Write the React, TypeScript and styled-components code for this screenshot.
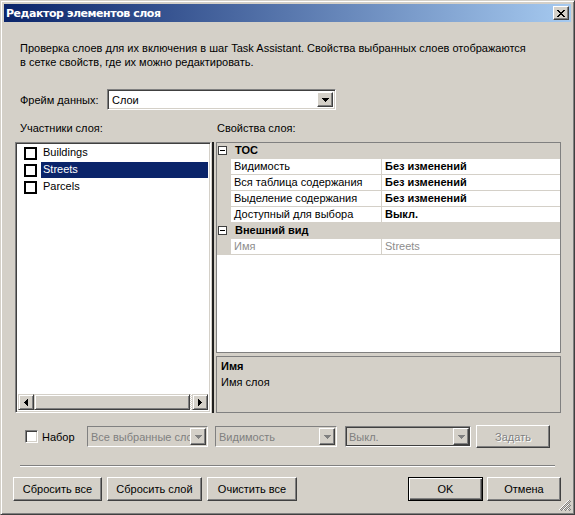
import styled, { createGlobalStyle, css } from "styled-components";

const GlobalStyle = createGlobalStyle`
  html, body {
    margin: 0;
    padding: 0;
    background: #D4D0C8;
  }
  body {
    font-family: "Liberation Sans", Arial, sans-serif;
    font-size: 11px;
    color: #000;
  }
  * { box-sizing: border-box; }
`;

const raised = css`
  border: 1px solid;
  border-color: #fff #404040 #404040 #fff;
  box-shadow: inset -1px -1px 0 #808080;
  background: #D4D0C8;
`;

const sunken = css`
  border: 1px solid;
  border-color: #808080 #fff #fff #808080;
  box-shadow: inset 1px 1px 0 #404040, inset -1px -1px 0 #D4D0C8;
`;

const Window = styled.div`
  position: relative;
  width: 575px;
  height: 515px;
  background: #D4D0C8;
  border: 1px solid;
  border-color: #D4D0C8 #404040 #404040 #D4D0C8;
  box-shadow: inset 1px 1px 0 #fff, inset -1px -1px 0 #808080;
  padding: 3px;
  display: flex;
  flex-direction: column;
`;

const TitleBar = styled.div`
  height: 18px;
  display: flex;
  align-items: center;
  justify-content: space-between;
  padding: 0 2px;
  background: linear-gradient(to right, #0A246A, #A6CAF0);
`;

const TitleText = styled.span`
  font-family: "DejaVu Sans", Verdana, sans-serif;
  font-weight: bold;
  font-size: 11px;
  color: #fff;
  letter-spacing: -0.45px;
`;

const CloseButton = styled.div`
  ${raised};
  width: 16px;
  height: 14px;
  display: flex;
  align-items: center;
  justify-content: center;
`;

const Body = styled.div`
  flex: 1;
  display: flex;
  flex-direction: column;
  padding: 0 10px 0 9px;
`;

const Description = styled.p`
  margin: 19px 0 0 7px;
  line-height: 14px;
`;

const FrameRow = styled.div`
  margin-top: 20px;
  padding-left: 7px;
  height: 21px;
  display: flex;
  align-items: center;
`;

const FieldLabel = styled.span<{ $width: number }>`
  width: ${(p) => p.$width}px;
  flex-shrink: 0;
`;

const ComboBox = styled.div<{ $width: number; $disabled?: boolean; $focus?: boolean; $ml?: number }>`
  width: ${(p) => p.$width}px;
  height: 21px;
  margin-left: ${(p) => p.$ml ?? 0}px;
  flex-shrink: 0;
  display: flex;
  align-items: center;
  ${(p) =>
    p.$disabled
      ? css`
          border: 1px solid;
          border-color: #808080 #fff #fff #808080;
          background: #D4D0C8;
          color: #808080;
          padding: 1px;
          ${p.$focus ? "box-shadow: inset 0 0 0 1px #404040;" : ""}
        `
      : css`
          ${sunken};
          background: #fff;
          padding: 2px;
        `}
`;

const ComboText = styled.span`
  flex: 1;
  padding-left: 2px;
  overflow: hidden;
  white-space: nowrap;
`;

const DropButton = styled.div`
  ${raised};
  width: 16px;
  height: 100%;
  flex-shrink: 0;
  display: flex;
  align-items: center;
  justify-content: center;
`;

const PanelLabels = styled.div`
  margin-top: 11px;
  display: flex;
  line-height: 14px;
`;

const PanelLabel = styled.span<{ $width?: number }>`
  ${(p) => (p.$width ? `width: ${p.$width}px;` : "")}
  padding-left: ${(p) => (p.$width ? 7 : 0)}px;
`;

const Panels = styled.div`
  margin-top: 7px;
  height: 271px;
  display: flex;
`;

const LayerList = styled.div`
  ${sunken};
  margin-left: 2px;
  width: 196px;
  background: #fff;
  display: flex;
  flex-direction: column;
  padding: 2px;
`;

const ListItems = styled.div`
  flex: 1;
`;

const ListItem = styled.div`
  height: 17px;
  display: flex;
  align-items: flex-start;
`;

const ItemCheck = styled.span`
  width: 13px;
  height: 13px;
  margin: 2px 0 0 6px;
  border: 2px solid #000;
  background: #fff;
  flex-shrink: 0;
`;

const ItemText = styled.span<{ $selected?: boolean }>`
  flex: 1;
  margin-left: 4px;
  padding-left: 2px;
  height: 16px;
  line-height: 15px;
  background: ${(p) => (p.$selected ? "#0A246A" : "transparent")};
  color: ${(p) => (p.$selected ? "#fff" : "#000")};
`;

const HScroll = styled.div`
  height: 16px;
  display: flex;
`;

const ScrollButton = styled.div`
  border: 1px solid;
  border-color: #D4D0C8 #404040 #404040 #D4D0C8;
  box-shadow: inset 1px 1px 0 #fff, inset -1px -1px 0 #808080;
  background: #D4D0C8;
  width: 16px;
  height: 16px;
  display: flex;
  align-items: center;
  justify-content: center;
`;

const ScrollThumb = styled(ScrollButton)`
  width: 156px;
`;

const ScrollTrack = styled.div`
  flex: 1;
  background-image: conic-gradient(#fff 25%, #D4D0C8 0 50%, #fff 0 75%, #D4D0C8 0);
  background-size: 2px 2px;
`;

const Splitter = styled.div`
  width: 5px;
  flex-shrink: 0;
  padding-left: 1px;
  &::before {
    content: "";
    display: block;
    width: 2px;
    height: 100%;
    background: #202020;
  }
`;

const GridColumn = styled.div`
  flex: 1;
  display: flex;
  flex-direction: column;
  gap: 3px;
`;

const PropArea = styled.div`
  height: 211px;
  border: 1px solid #808080;
  background: #fff;
`;

const PropRow = styled.div`
  height: 16px;
  display: flex;
  border-bottom: 1px solid #D4D0C8;
`;

const MarginCell = styled.div`
  width: 14px;
  flex-shrink: 0;
  background: #D4D0C8;
  display: flex;
  align-items: center;
`;

const NameCell = styled.div<{ $muted?: boolean }>`
  width: 151px;
  flex-shrink: 0;
  border-right: 1px solid #D4D0C8;
  padding-left: 3px;
  line-height: 15px;
  white-space: nowrap;
  overflow: hidden;
  color: ${(p) => (p.$muted ? "#8D8D8D" : "#000")};
`;

const ValueCell = styled.div<{ $muted?: boolean }>`
  flex: 1;
  padding-left: 3px;
  line-height: 15px;
  font-weight: ${(p) => (p.$muted ? "normal" : "bold")};
  color: ${(p) => (p.$muted ? "#8D8D8D" : "#000")};
`;

const CategoryRow = styled.div`
  height: 16px;
  display: flex;
  align-items: center;
  background: #D4D0C8;
  border-bottom: 1px solid #D4D0C8;
`;

const Expander = styled.span`
  width: 9px;
  height: 9px;
  margin-left: 1px;
  border: 1px solid #404040;
  background: #fff;
  position: relative;
  flex-shrink: 0;
  &::after {
    content: "";
    position: absolute;
    left: 1px;
    top: 3px;
    width: 5px;
    height: 1px;
    background: #000;
  }
`;

const CategoryText = styled.span`
  margin-left: 8px;
  font-weight: bold;
  line-height: 15px;
`;

const HelpPane = styled.div`
  flex: 1;
  border: 1px solid #808080;
  background: #D4D0C8;
  padding: 2px 0 0 4px;
  line-height: 14px;
`;

const HelpTitle = styled.div`
  font-weight: bold;
  margin-bottom: 2px;
`;

const ControlRow = styled.div`
  margin-top: 12px;
  height: 23px;
  display: flex;
  align-items: center;
`;

const CheckBox = styled.span`
  ${sunken};
  width: 13px;
  height: 13px;
  margin-left: 12px;
  background: #fff;
  flex-shrink: 0;
`;

const CheckLabel = styled.span`
  width: 45px;
  margin-left: 4px;
  flex-shrink: 0;
`;

const ActionButton = styled.div<{ $width: number; $height?: number; $default?: boolean; $disabled?: boolean; $ml?: number }>`
  width: ${(p) => p.$width}px;
  height: ${(p) => p.$height ?? 24}px;
  margin-left: ${(p) => p.$ml ?? 0}px;
  flex-shrink: 0;
  display: flex;
  align-items: center;
  justify-content: center;
  background: #D4D0C8;
  ${(p) =>
    p.$default
      ? css`
          border: 1px solid #000;
          box-shadow: inset 1px 1px 0 #fff, inset -1px -1px 0 #404040, inset -2px -2px 0 #808080;
        `
      : css`
          border: 1px solid;
          border-color: #fff #404040 #404040 #fff;
          box-shadow: inset -1px -1px 0 #808080;
        `}
  ${(p) =>
    p.$disabled &&
    css`
      color: #808080;
      text-shadow: 1px 1px 0 #fff;
    `}
`;

const Separator = styled.div`
  margin: 17px 6px 0 7px;
  height: 2px;
  border-top: 1px solid #808080;
  border-bottom: 1px solid #fff;
`;

const ButtonRow = styled.div`
  margin-top: 10px;
  display: flex;
  gap: 5px;
`;

const Spacer = styled.div`
  flex: 1;
`;

const SizeGrip = styled.svg`
  position: absolute;
  right: 3px;
  bottom: 3px;
`;

function DownArrow({ color = "#000" }: { color?: string }) {
  return (
    <svg width="7" height="4" viewBox="0 0 7 4" shapeRendering="crispEdges">
      <path d="M0 0h7v1H0zM1 1h5v1H1zM2 2h3v1H2zM3 3h1v1H3z" fill={color} />
    </svg>
  );
}

function SideArrow({ dir }: { dir: "left" | "right" }) {
  const d =
    dir === "left"
      ? "M3 0h1v7H3zM2 1h1v5H2zM1 2h1v3H1zM0 3h1v1H0z"
      : "M0 0h1v7H0zM1 1h1v5H1zM2 2h1v3H2zM3 3h1v1H3z";
  return (
    <svg width="4" height="7" viewBox="0 0 4 7" shapeRendering="crispEdges">
      <path d={d} fill="#000" />
    </svg>
  );
}

const layers = [
  { name: "Buildings", selected: false },
  { name: "Streets", selected: true },
  { name: "Parcels", selected: false },
];

const tocProps = [
  ["Видимость", "Без изменений"],
  ["Вся таблица содержания", "Без изменений"],
  ["Выделение содержания", "Без изменений"],
  ["Доступный для выбора", "Выкл."],
];

function App() {
  return (
    <>
      <GlobalStyle />
      <Window>
        <TitleBar>
          <TitleText>Редактор элементов слоя</TitleText>
          <CloseButton>
            <svg width="8" height="7" viewBox="0 0 8 7" shapeRendering="crispEdges">
              <path
                d="M0 0h2v1H0zM6 0h2v1H6zM1 1h2v1H1zM5 1h2v1H5zM2 2h4v1H2zM3 3h2v1H3zM2 4h4v1H2zM1 5h2v1H1zM5 5h2v1H5zM0 6h2v1H0zM6 6h2v1H6z"
                fill="#000"
              />
            </svg>
          </CloseButton>
        </TitleBar>
        <Body>
          <Description>
            Проверка слоев для их включения в шаг Task Assistant. Свойства выбранных слоев отображаются
            <br />
            в сетке свойств, где их можно редактировать.
          </Description>

          <FrameRow>
            <FieldLabel $width={87}>Фрейм данных:</FieldLabel>
            <ComboBox $width={229}>
              <ComboText>Слои</ComboText>
              <DropButton>
                <DownArrow />
              </DropButton>
            </ComboBox>
          </FrameRow>

          <PanelLabels>
            <PanelLabel $width={204}>Участники слоя:</PanelLabel>
            <PanelLabel>Свойства слоя:</PanelLabel>
          </PanelLabels>

          <Panels>
            <LayerList>
              <ListItems>
                {layers.map((l) => (
                  <ListItem key={l.name}>
                    <ItemCheck />
                    <ItemText $selected={l.selected}>{l.name}</ItemText>
                  </ListItem>
                ))}
              </ListItems>
              <HScroll>
                <ScrollButton>
                  <SideArrow dir="left" />
                </ScrollButton>
                <ScrollThumb />
                <ScrollTrack />
                <ScrollButton>
                  <SideArrow dir="right" />
                </ScrollButton>
              </HScroll>
            </LayerList>

            <Splitter />

            <GridColumn>
              <PropArea>
                <CategoryRow>
                  <Expander />
                  <CategoryText>TOC</CategoryText>
                </CategoryRow>
                {tocProps.map(([name, value]) => (
                  <PropRow key={name}>
                    <MarginCell />
                    <NameCell>{name}</NameCell>
                    <ValueCell>{value}</ValueCell>
                  </PropRow>
                ))}
                <CategoryRow>
                  <Expander />
                  <CategoryText>Внешний вид</CategoryText>
                </CategoryRow>
                <PropRow>
                  <MarginCell />
                  <NameCell $muted>Имя</NameCell>
                  <ValueCell $muted>Streets</ValueCell>
                </PropRow>
              </PropArea>
              <HelpPane>
                <HelpTitle>Имя</HelpTitle>
                <div>Имя слоя</div>
              </HelpPane>
            </GridColumn>
          </Panels>

          <ControlRow>
            <CheckBox />
            <CheckLabel>Набор</CheckLabel>
            <ComboBox $width={121} $disabled>
              <ComboText>Все выбранные слои</ComboText>
              <DropButton>
                <DownArrow color="#808080" />
              </DropButton>
            </ComboBox>
            <ComboBox $width={122} $disabled $ml={7}>
              <ComboText>Видимость</ComboText>
              <DropButton>
                <DownArrow color="#808080" />
              </DropButton>
            </ComboBox>
            <ComboBox $width={126} $disabled $focus $ml={8}>
              <ComboText>Выкл.</ComboText>
              <DropButton>
                <DownArrow color="#808080" />
              </DropButton>
            </ComboBox>
            <ActionButton $width={74} $height={23} $disabled $ml={5}>
              Задать
            </ActionButton>
          </ControlRow>

          <Separator />

          <ButtonRow>
            <ActionButton $width={89}>Сбросить все</ActionButton>
            <ActionButton $width={95}>Сбросить слой</ActionButton>
            <ActionButton $width={90}>Очистить все</ActionButton>
            <Spacer />
            <ActionButton $width={75} $default>
              OK
            </ActionButton>
            <ActionButton $width={74} $ml={-1}>
              Отмена
            </ActionButton>
          </ButtonRow>
        </Body>
        <SizeGrip width="12" height="12" viewBox="0 0 12 12" shapeRendering="crispEdges">
          <path d="M11 1L1 11M11 5L5 11M11 9L9 11" stroke="#808080" strokeWidth="1.4" />
          <path d="M12 2L2 12M12 6L6 12M12 10L10 12" stroke="#808080" strokeWidth="1" />
          <path d="M10 1L0 11M10 5L4 11M10 9L8 11" stroke="#fff" strokeWidth="1" />
        </SizeGrip>
      </Window>
    </>
  );
}

export default App;
